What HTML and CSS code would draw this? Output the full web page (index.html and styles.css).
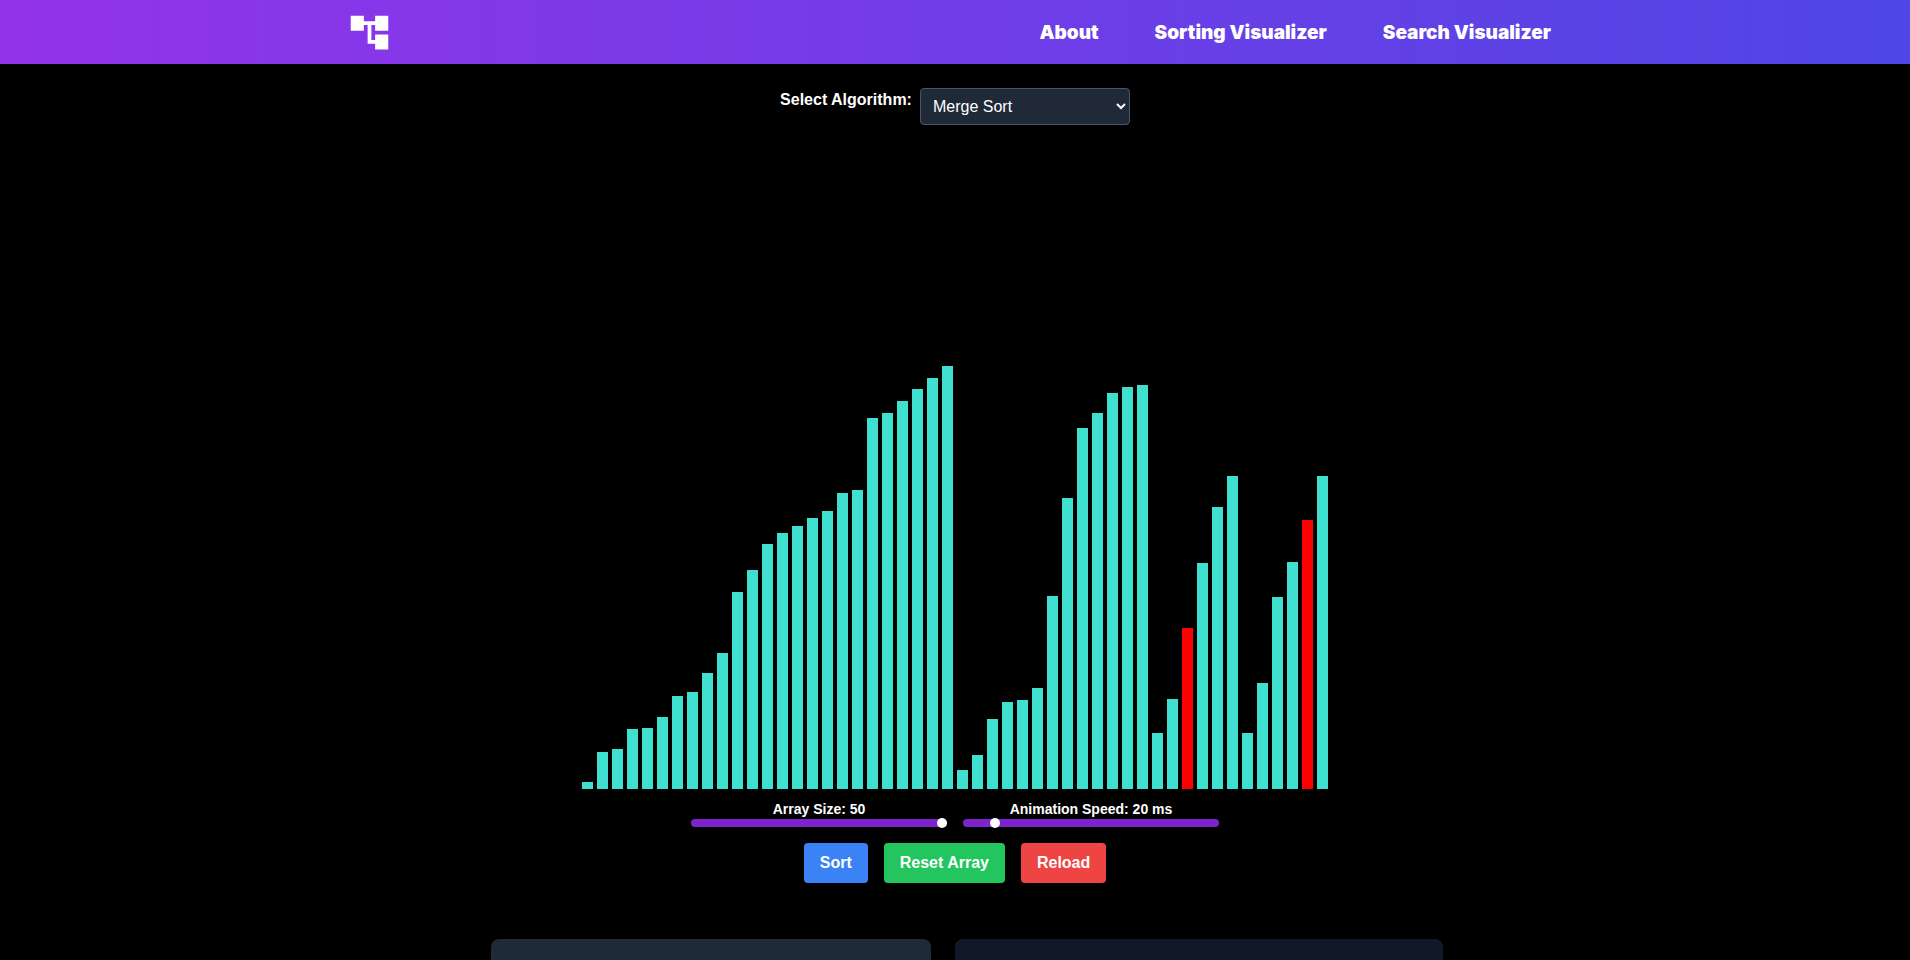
FILE: index.html
```html
<!DOCTYPE html>
<html lang="en">
<head>
<meta charset="utf-8">
<meta name="viewport" content="width=device-width, initial-scale=1">
<title>Sorting Visualizer</title>
<link rel="stylesheet" href="styles.css">
</head>
<body>
<header class="header">
  <div class="header-inner">
    <a class="logo" href="#" aria-label="Home">
      <svg width="45" height="45" viewBox="0 0 24 24" fill="currentColor" aria-hidden="true"><path d="M22 11V3h-7v3H9V3H2v8h7V8h2v10h4v3h7v-8h-7v3h-2V8h2v3z"/></svg>
    </a>
    <nav class="nav">
      <a href="#">About</a>
      <a href="#">Sorting Visualizer</a>
      <a href="#">Search Visualizer</a>
    </nav>
  </div>
</header>
<main class="main">
  <div class="picker">
    <label for="algorithm">Select Algorithm:</label>
    <select id="algorithm">
      <option>Bubble Sort</option>
      <option>Insertion Sort</option>
      <option selected>Merge Sort</option>
      <option>Quick Sort</option>
      <option>Selection Sort</option>
    </select>
  </div>
  <div class="chart" id="chart"></div>
  <div class="sliders">
    <div class="slider">
      <label for="size">Array Size: 50</label>
      <input id="size" type="range" min="5" max="50" value="50">
    </div>
    <div class="slider">
      <label for="speed">Animation Speed: 20 ms</label>
      <input id="speed" type="range" min="10" max="100" value="20">
    </div>
  </div>
  <div class="actions">
    <button class="btn btn-sort" type="button">Sort</button>
    <button class="btn btn-reset" type="button">Reset Array</button>
    <button class="btn btn-reload" type="button">Reload</button>
  </div>
  <div class="cards">
    <section class="card card-info"></section>
    <section class="card card-code"></section>
  </div>
</main>
<script src="script.js"></script>
</body>
</html>
```
FILE: styles.css
```css
* {
  box-sizing: border-box;
}

body {
  margin: 0;
  height: 100vh;
  overflow: hidden;
  background: #000;
  color: #fff;
  font: 16px/24px "Liberation Sans", Arial, sans-serif;
}

.header {
  background: linear-gradient(to right, #9333ea, #4f46e5);
}

.header-inner {
  display: flex;
  align-items: center;
  justify-content: space-between;
  max-width: 1216px;
  height: 64px;
  margin: 0 auto;
}

.logo {
  display: flex;
  color: #fff;
}

.nav {
  display: flex;
  gap: 32px;
}

.nav a {
  padding: 2px 12px 0;
  color: #fff;
  font-family: "Arial Black", Inter, sans-serif;
  font-size: 19px;
  font-weight: 900;
  line-height: 28px;
  text-decoration: none;
}

.main {
  display: flex;
  flex-direction: column;
  align-items: center;
  padding-top: 24px;
}

.picker {
  display: flex;
  align-items: flex-start;
  gap: 8px;
  font-weight: 700;
}

.picker select {
  width: 210px;
  height: 37px;
  padding: 0 8px;
  border: 1px solid #4b5563;
  border-radius: 4px;
  background: #1f2937;
  color: #fff;
  font: inherit;
  font-weight: 400;
}

.chart {
  display: flex;
  align-items: flex-end;
  justify-content: center;
  gap: 4px;
  height: 640px;
  margin-top: 24px;
}

.bar {
  width: 11px;
  background: #40e0d0;
}

.bar-active {
  background: #f00;
}

.sliders {
  display: flex;
  gap: 16px;
  margin-top: 10px;
}

.slider {
  display: flex;
  flex-direction: column;
  align-items: center;
  width: 256px;
  font-size: 14px;
  font-weight: 700;
  line-height: 20px;
}

.slider input {
  appearance: none;
  width: 100%;
  height: 8px;
  margin: 0;
  border-radius: 4px;
  background: #7e22ce;
}

.slider input::-webkit-slider-thumb {
  appearance: none;
  width: 10px;
  height: 10px;
  border-radius: 50%;
  background: #fff;
}

.actions {
  display: flex;
  gap: 16px;
  margin-top: 16px;
}

.btn {
  padding: 8px 16px;
  border: 0;
  border-radius: 4px;
  color: #fff;
  font: inherit;
  font-weight: 700;
}

.btn-sort {
  background: #3b82f6;
}

.btn-reset {
  background: #22c55e;
}

.btn-reload {
  background: #ef4444;
}

.cards {
  display: flex;
  width: 100%;
  max-width: 976px;
  margin-top: 56px;
}

.card {
  min-height: 320px;
  margin-left: 24px;
  border-radius: 8px;
}

.card-info {
  flex: 440;
  background: #1f2a37;
}

.card-code {
  flex: 488;
  background: #111827;
}
```
FILE: script.js
```js
const values = [
  7, 37, 40, 60, 61, 72, 93, 97, 116, 136, 197, 219, 245, 256, 263, 271, 278,
  296, 299, 371, 376, 388, 400, 411, 423, 19, 34, 70, 87, 89, 101, 193, 291,
  361, 376, 396, 402, 404, 56, 90, 161, 226, 282, 313, 56, 106, 192, 227, 269,
  313
];
const active = [40, 48];

const chart = document.getElementById("chart");
values.forEach((value, index) => {
  const bar = document.createElement("div");
  bar.className = active.includes(index) ? "bar bar-active" : "bar";
  bar.style.height = value + "px";
  chart.append(bar);
});
```
